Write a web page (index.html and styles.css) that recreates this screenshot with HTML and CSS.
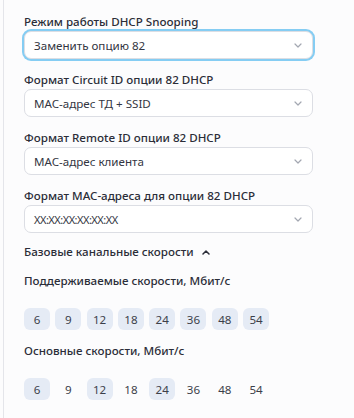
FILE: index.html
```html
<!DOCTYPE html>
<html lang="ru">

<head>
  <meta charset="UTF-8">
  <title>DHCP Snooping</title>
  <link rel="stylesheet" href="styles.css">
</head>

<body>
  <div class="panel">
    <div class="field">
      <label class="label">Режим работы DHCP Snooping</label>
      <div class="select focused">
        <span>Заменить опцию 82</span>
        <svg class="chevron" width="8" height="5" viewBox="0 0 8 5"><path d="M1 1l3 3 3-3" /></svg>
      </div>
    </div>
    <div class="field">
      <label class="label">Формат Circuit ID опции 82 DHCP</label>
      <div class="select">
        <span>MAC-адрес ТД + SSID</span>
        <svg class="chevron" width="8" height="5" viewBox="0 0 8 5"><path d="M1 1l3 3 3-3" /></svg>
      </div>
    </div>
    <div class="field">
      <label class="label">Формат Remote ID опции 82 DHCP</label>
      <div class="select">
        <span>MAC-адрес клиента</span>
        <svg class="chevron" width="8" height="5" viewBox="0 0 8 5"><path d="M1 1l3 3 3-3" /></svg>
      </div>
    </div>
    <div class="field">
      <label class="label">Формат MAC-адреса для опции 82 DHCP</label>
      <div class="select">
        <span class="mac">XX:XX:XX:XX:XX:XX</span>
        <svg class="chevron" width="8" height="5" viewBox="0 0 8 5"><path d="M1 1l3 3 3-3" /></svg>
      </div>
    </div>

    <div class="section-title">
      Базовые канальные скорости
      <svg class="caret" width="8" height="5" viewBox="0 0 8 5"><path d="M1 4l3-3 3 3" /></svg>
    </div>

    <div class="sub-title">Поддерживаемые скорости, Мбит/с</div>
    <div class="chips">
      <span class="chip on">6</span>
      <span class="chip on">9</span>
      <span class="chip on">12</span>
      <span class="chip on">18</span>
      <span class="chip on">24</span>
      <span class="chip on">36</span>
      <span class="chip on">48</span>
      <span class="chip on">54</span>
    </div>

    <div class="sub-title">Основные скорости, Мбит/с</div>
    <div class="chips">
      <span class="chip on">6</span>
      <span class="chip">9</span>
      <span class="chip on">12</span>
      <span class="chip">18</span>
      <span class="chip on">24</span>
      <span class="chip">36</span>
      <span class="chip">48</span>
      <span class="chip">54</span>
    </div>
  </div>
</body>

</html>
```

FILE: styles.css
```css
body {
  margin: 0;
  background: #fcfcfd;
  font-family: "Noto Sans", "Open Sans", sans-serif;
  color: #2b2d38;
}

.panel {
  margin-left: 3px;
  min-height: 418px;
  box-sizing: border-box;
  border-left: 1px solid #e4e5ea;
  padding: 14px 41px 0 20px;
}

.field {
  display: flex;
  flex-direction: column;
  gap: 1px;
  margin-bottom: 13px;
}

.label {
  font-size: 11.6px;
  line-height: 16px;
  font-weight: 500;
}

.select {
  height: 28px;
  box-sizing: border-box;
  border: 1px solid #dcdee4;
  border-radius: 7px;
  background: #fff;
  display: flex;
  align-items: center;
  justify-content: space-between;
  padding: 0 10px 0 9px;
  font-size: 11.6px;
  color: #333642;
}

.select.focused {
  box-shadow: 0 0 0 2px #85cdf3;
}

.mac {
  font-size: 11px;
  letter-spacing: -0.5px;
}

.chevron path,
.caret path {
  fill: none;
  stroke: #a3a7b1;
  stroke-width: 1.2;
  stroke-linecap: round;
  stroke-linejoin: round;
}

.section-title {
  display: flex;
  align-items: center;
  gap: 8px;
  font-size: 11.6px;
  line-height: 16px;
  font-weight: 500;
  margin-top: -2px;
}

.caret path {
  stroke: #2b2d38;
  stroke-width: 1.5;
}

.sub-title {
  font-size: 11.6px;
  line-height: 16px;
  font-weight: 500;
  margin-top: 13px;
}

.chips {
  display: flex;
  gap: 5.3px;
  margin-top: 19px;
}

.chip {
  width: 26px;
  height: 22px;
  border-radius: 6px;
  display: flex;
  align-items: center;
  justify-content: center;
  font-size: 11.6px;
  color: #3c3f4a;
}

.chip.on {
  background: #e5ebf5;
}
```
